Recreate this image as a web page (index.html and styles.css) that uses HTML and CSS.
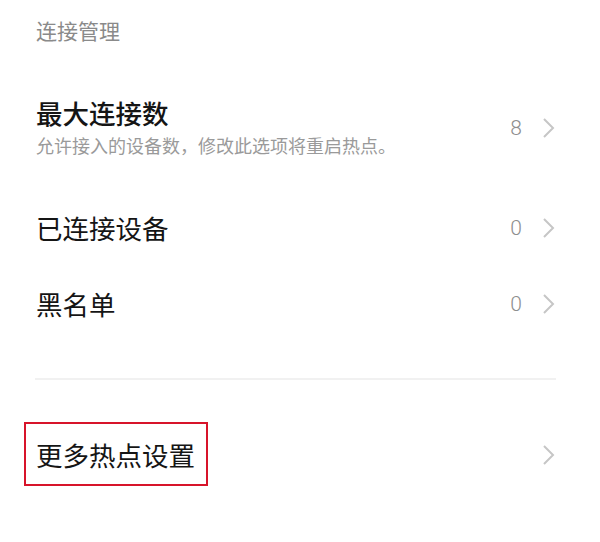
FILE: index.html
```html
<!DOCTYPE html>
<html lang="zh-CN">
<head>
<meta charset="utf-8">
<link rel="stylesheet" href="styles.css">
</head>
<body>
<div class="page">
  <div class="section-title">连接管理</div>

  <div class="row row-tall">
    <div class="texts">
      <div class="title title-strong">最大连接数</div>
      <div class="subtitle">允许接入的设备数，修改此选项将重启热点。</div>
    </div>
    <div class="value">8</div>
    <svg class="chev" viewBox="0 0 14 22" width="14" height="22"><path d="M2 2 L11 11 L2 20" fill="none" stroke="#c6c6c6" stroke-width="2"/></svg>
  </div>

  <div class="row">
    <div class="texts"><div class="title">已连接设备</div></div>
    <div class="value">0</div>
    <svg class="chev" viewBox="0 0 14 22" width="14" height="22"><path d="M2 2 L11 11 L2 20" fill="none" stroke="#c6c6c6" stroke-width="2"/></svg>
  </div>

  <div class="row">
    <div class="texts"><div class="title">黑名单</div></div>
    <div class="value">0</div>
    <svg class="chev" viewBox="0 0 14 22" width="14" height="22"><path d="M2 2 L11 11 L2 20" fill="none" stroke="#c6c6c6" stroke-width="2"/></svg>
  </div>

  <div class="divider"></div>

  <div class="row row-last">
    <div class="texts"><div class="title"><span class="highlight">更多热点设置</span></div></div>
    <svg class="chev" viewBox="0 0 14 22" width="14" height="22"><path d="M2 2 L11 11 L2 20" fill="none" stroke="#c6c6c6" stroke-width="2"/></svg>
  </div>
</div>
</body>
</html>
```

FILE: styles.css
```css
html, body {
  margin: 0;
  padding: 0;
  background: #ffffff;
}
body {
  font-family: "Noto Sans CJK SC", "Noto Sans", sans-serif;
  color: #1a1a1a;
}
.page {
  width: 600px;
  height: 542px;
  padding: 0 44px 0 36px;
  box-sizing: border-box;
}
.section-title {
  height: 66px;
  line-height: 61px;
  font-size: 21px;
  color: #8a8a8a;
}
.row {
  display: flex;
  align-items: center;
  height: 76px;
}
.row-tall {
  height: 124px;
}
.texts {
  flex: 1;
}
.title {
  font-size: 26.5px;
  line-height: 34px;
  font-weight: 400;
  color: #151515;
}
.title-strong {
  font-weight: 500;
}
.subtitle {
  font-size: 18px;
  line-height: 30px;
  color: #9a9a9a;
}
.value {
  font-family: "Roboto", "Noto Sans", sans-serif;
  font-weight: 300;
  font-size: 21px;
  color: #8e8e8e;
  margin-right: 20px;
}
.chev {
  display: block;
  flex: none;
}
.divider {
  height: 2px;
  background: #f1f1f1;
  margin: 36px 0 40px -1px;
}
.row-last {
  margin-top: -3px;
}
.highlight {
  display: inline-block;
  border: 2px solid #d7142a;
  padding: 14px 11px 12px 10px;
  margin: -16px 0 -14px -12px;
  line-height: 34px;
}
```
